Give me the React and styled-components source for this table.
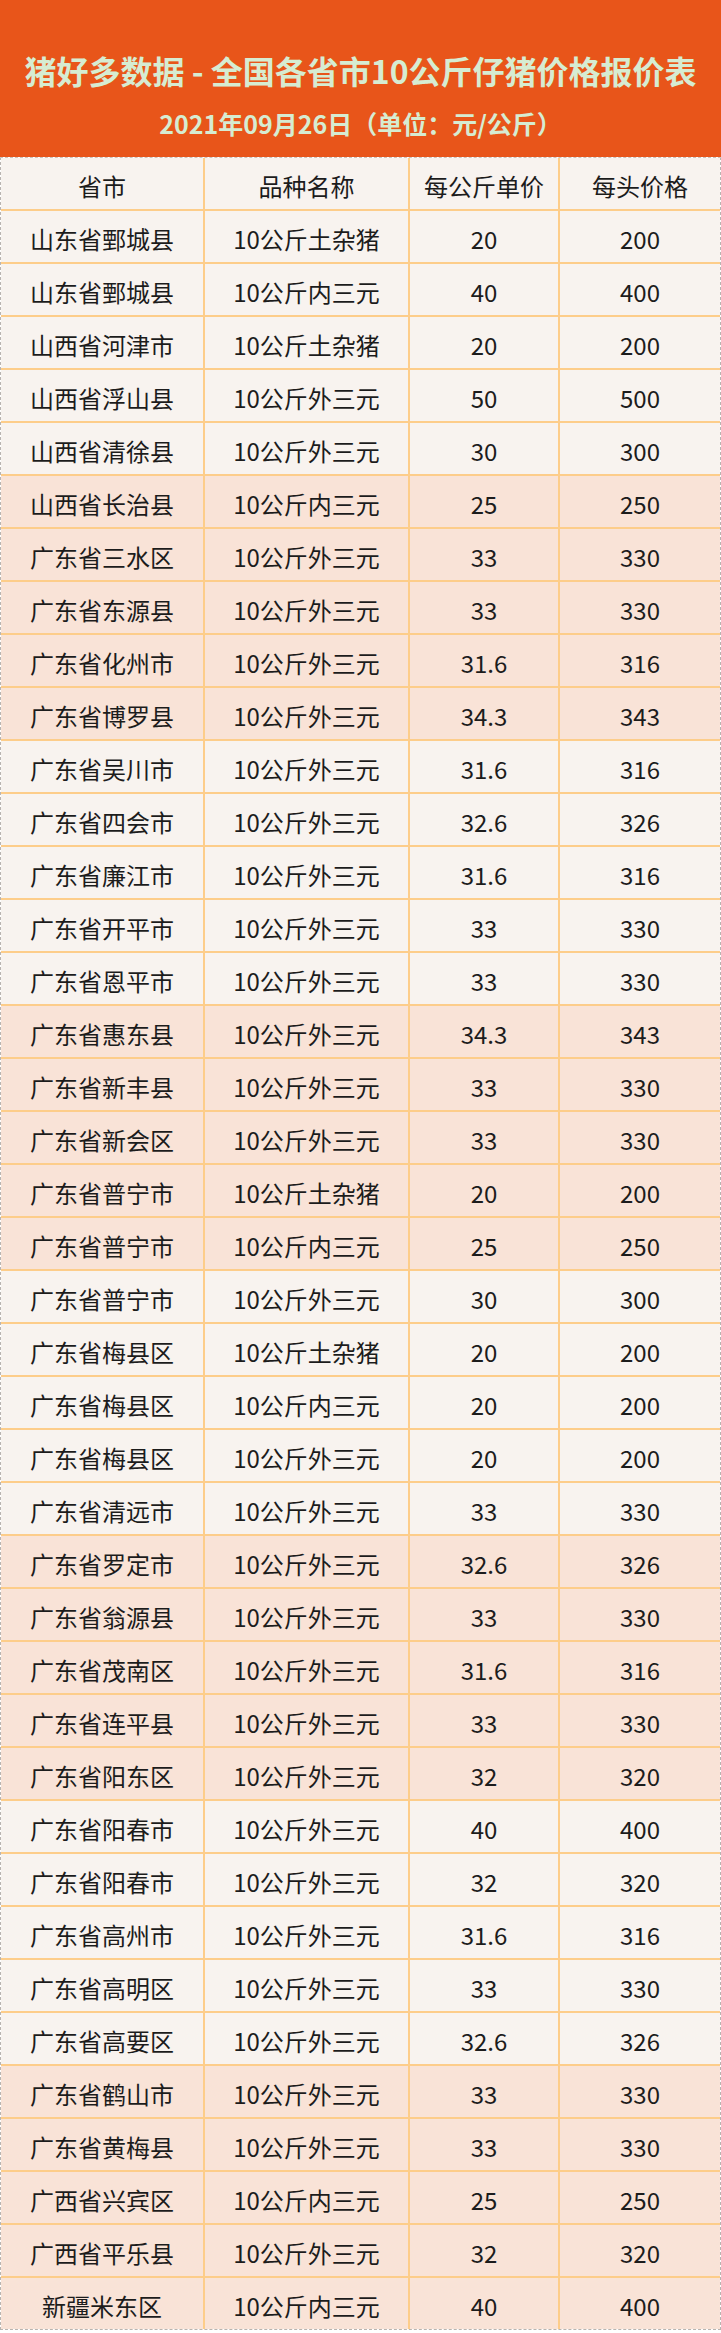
import React from "react";
import styled, { createGlobalStyle } from "styled-components";

const GlobalStyle = createGlobalStyle`
  html, body { margin: 0; padding: 0; background: #ffffff; }
  body { font-family: "Noto Sans CJK SC", "Noto Sans", sans-serif; }
`;

const Page = styled.div`
  width: 721px;
  display: flex;
  flex-direction: column;
`;

const Banner = styled.header`
  height: 157px;
  box-sizing: border-box;
  background: #e8551a;
  display: flex;
  flex-direction: column;
  align-items: center;
  padding-top: 50px;
  gap: 18px;
`;

const Title = styled.h1`
  margin: 0;
  font-size: 32px;
  line-height: 40px;
  font-weight: 700;
  color: #d6ecd2;
  white-space: nowrap;
`;

const Subtitle = styled.div`
  font-size: 25px;
  line-height: 30px;
  font-weight: 700;
  color: #d6ecd2;
  white-space: nowrap;
`;

const Table = styled.div`
  border: 1px dashed #b9b4b0;
  border-top-color: #c9c2bc;
  display: flex;
  flex-direction: column;
`;

const Row = styled.div`
  display: grid;
  grid-template-columns: 204px 205px 150px 1fr;
  height: 53px;
  box-sizing: border-box;
  background: ${(p) => (p.$pink ? "#f9e3d7" : "#f8f3ef")};
  border-bottom: 2px solid #fdcd8a;
  &:last-child { border-bottom: none; height: 51px; }
`;

const Cell = styled.div`
  display: flex;
  align-items: center;
  justify-content: center;
  padding-top: 3px;
  box-sizing: border-box;
  font-size: 24px;
  color: #1c1c1c;
  white-space: nowrap;
  border-right: 2px solid #fdcd8a;
  &:last-child { border-right: none; }
`;

const rows = [
  ["山东省鄄城县", "10公斤土杂猪", "20", "200"],
  ["山东省鄄城县", "10公斤内三元", "40", "400"],
  ["山西省河津市", "10公斤土杂猪", "20", "200"],
  ["山西省浮山县", "10公斤外三元", "50", "500"],
  ["山西省清徐县", "10公斤外三元", "30", "300"],
  ["山西省长治县", "10公斤内三元", "25", "250"],
  ["广东省三水区", "10公斤外三元", "33", "330"],
  ["广东省东源县", "10公斤外三元", "33", "330"],
  ["广东省化州市", "10公斤外三元", "31.6", "316"],
  ["广东省博罗县", "10公斤外三元", "34.3", "343"],
  ["广东省吴川市", "10公斤外三元", "31.6", "316"],
  ["广东省四会市", "10公斤外三元", "32.6", "326"],
  ["广东省廉江市", "10公斤外三元", "31.6", "316"],
  ["广东省开平市", "10公斤外三元", "33", "330"],
  ["广东省恩平市", "10公斤外三元", "33", "330"],
  ["广东省惠东县", "10公斤外三元", "34.3", "343"],
  ["广东省新丰县", "10公斤外三元", "33", "330"],
  ["广东省新会区", "10公斤外三元", "33", "330"],
  ["广东省普宁市", "10公斤土杂猪", "20", "200"],
  ["广东省普宁市", "10公斤内三元", "25", "250"],
  ["广东省普宁市", "10公斤外三元", "30", "300"],
  ["广东省梅县区", "10公斤土杂猪", "20", "200"],
  ["广东省梅县区", "10公斤内三元", "20", "200"],
  ["广东省梅县区", "10公斤外三元", "20", "200"],
  ["广东省清远市", "10公斤外三元", "33", "330"],
  ["广东省罗定市", "10公斤外三元", "32.6", "326"],
  ["广东省翁源县", "10公斤外三元", "33", "330"],
  ["广东省茂南区", "10公斤外三元", "31.6", "316"],
  ["广东省连平县", "10公斤外三元", "33", "330"],
  ["广东省阳东区", "10公斤外三元", "32", "320"],
  ["广东省阳春市", "10公斤外三元", "40", "400"],
  ["广东省阳春市", "10公斤外三元", "32", "320"],
  ["广东省高州市", "10公斤外三元", "31.6", "316"],
  ["广东省高明区", "10公斤外三元", "33", "330"],
  ["广东省高要区", "10公斤外三元", "32.6", "326"],
  ["广东省鹤山市", "10公斤外三元", "33", "330"],
  ["广东省黄梅县", "10公斤外三元", "33", "330"],
  ["广西省兴宾区", "10公斤内三元", "25", "250"],
  ["广西省平乐县", "10公斤外三元", "32", "320"],
  ["新疆米东区", "10公斤内三元", "40", "400"],
];

export default function App() {
  return (
    <Page>
      <GlobalStyle />
      <Banner>
        <Title>猪好多数据 - 全国各省市10公斤仔猪价格报价表</Title>
        <Subtitle>2021年09月26日（单位：元/公斤）</Subtitle>
      </Banner>
      <Table>
        <Row>
          <Cell>省市</Cell>
          <Cell>品种名称</Cell>
          <Cell>每公斤单价</Cell>
          <Cell>每头价格</Cell>
        </Row>
        {rows.map((r, i) => (
          <Row key={i} $pink={Math.floor(i / 5) % 2 === 1}>
            {r.map((c, j) => (
              <Cell key={j}>{c}</Cell>
            ))}
          </Row>
        ))}
      </Table>
    </Page>
  );
}
